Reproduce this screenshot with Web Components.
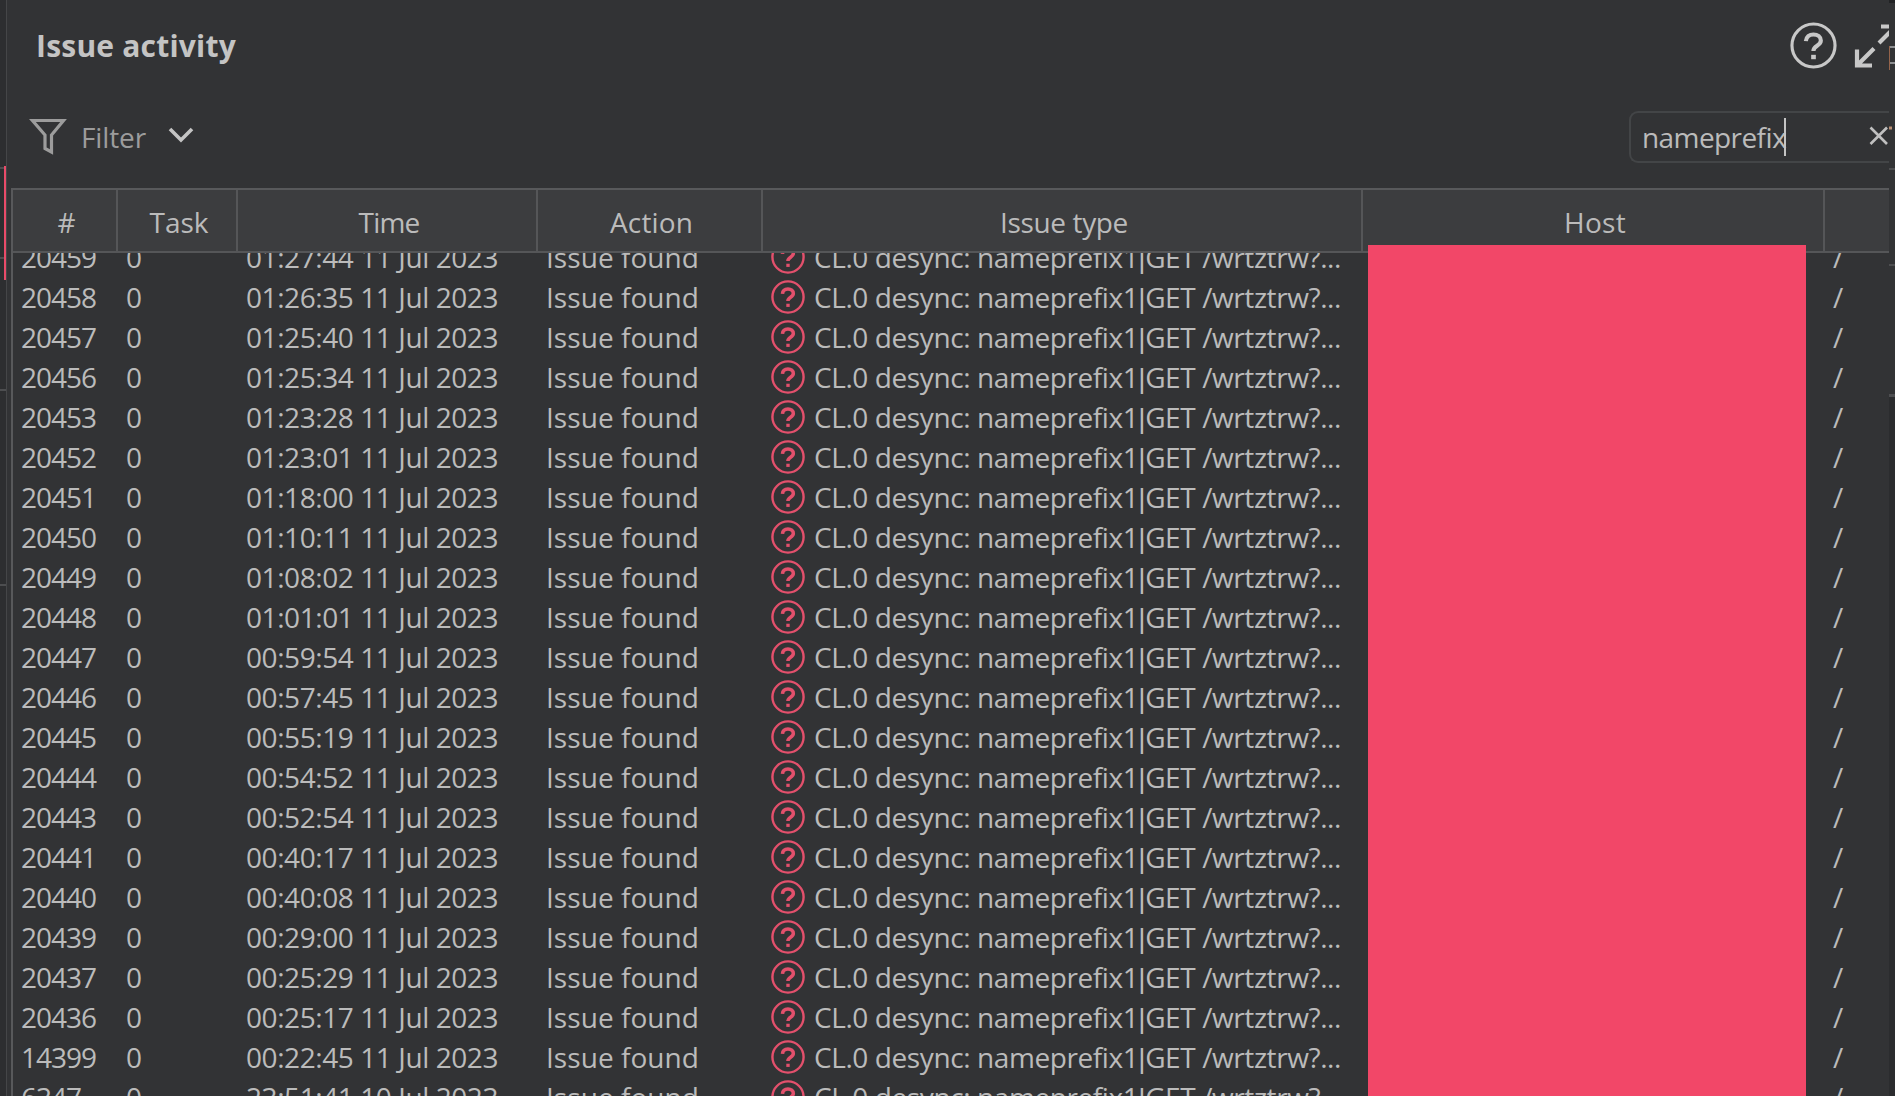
<!DOCTYPE html>
<html lang="en">
<head>
<meta charset="utf-8">
<title>Issue activity</title>
<style>
    html, body {
        margin: 0;
        height: 100%;
        overflow: hidden;
        background: #323335;
    }
    body {
        font-family: "Open Sans", "Noto Sans", sans-serif;
        font-size: 28px;
        color: #bbbbbb;
    }
</style>
</head>
<body>
<issue-window></issue-window>

<script>
(function() {
    // Single line of text, letter-spaced to fill the given width
    class FitText extends HTMLElement {
        constructor() {
            super();
            this.attachShadow({ mode: 'open' });
        }

        connectedCallback() {
            this.shadowRoot.innerHTML = `
                <style>
                    :host { display: block; flex: none; line-height: 40px; }
                    span { white-space: pre; }
                </style>
                <span><slot></slot></span>
            `;
            const span = this.shadowRoot.querySelector('span');
            const width = parseFloat(this.getAttribute('width'));
            const count = this.textContent.length;
            if (width && count > 1) {
                const natural = span.getBoundingClientRect().width;
                this.style.letterSpacing = ((width - natural) / count).toFixed(3) + 'px';
            }
        }
    }

    class HelpIcon extends HTMLElement {
        constructor() {
            super();
            this.attachShadow({ mode: 'open' });
        }

        connectedCallback() {
            const size = this.getAttribute('size') || '34';
            const stroke = this.getAttribute('stroke') || '2';
            const mark = this.getAttribute('mark') || '4';
            this.shadowRoot.innerHTML = `
                <style>
                    :host { display: block; flex: none; width: ${size}px; height: ${size}px; }
                    svg { display: block; }
                </style>
                <svg width="${size}" height="${size}" viewBox="0 0 48 48" fill="none" stroke="currentColor">
                    <circle cx="24" cy="24" r="22" stroke-width="${stroke}"/>
                    <path d="M16.2 19.6c.4-4.600 3.700-6.900 7.700-6.900 4.400 0 7.600 2.500 7.600 6.300 0 5.600-7.600 5-7.600 10.600" stroke-width="${mark}"/>
                    <path d="M24 33.500v4.500" stroke-width="4.800"/>
                </svg>
            `;
        }
    }

    class PanelHeader extends HTMLElement {
        constructor() {
            super();
            this.attachShadow({ mode: 'open' });
        }

        connectedCallback() {
            this.shadowRoot.innerHTML = `
                <style>
                    :host {
                        display: flex;
                        justify-content: space-between;
                        align-items: center;
                        height: 92px;
                        padding-left: 29px;
                        box-sizing: border-box;
                    }
                    .title { font-size: 30px; font-weight: 700; color: #c4c4c4; }
                    .tools { display: flex; align-items: center; gap: 17px; color: #c8c8c8; }
                    svg { display: block; }
                    help-icon { margin-bottom: 2px; }
                </style>
                <fit-text class="title" width="200">Issue activity</fit-text>
                <div class="tools">
                    <help-icon size="47" stroke="3.200" mark="4.200"></help-icon>
                    <svg width="35" height="46" viewBox="0 0 35 46" fill="none" stroke="currentColor" stroke-width="4.200">
                        <path d="M3 26.500V42.500H18M3.500 42L20 25.500M25 20L41 4M27 3.500H41"/>
                    </svg>
                </div>
            `;
        }
    }

    class FilterBar extends HTMLElement {
        constructor() {
            super();
            this.attachShadow({ mode: 'open' });
        }

        connectedCallback() {
            this.shadowRoot.innerHTML = `
                <style>
                    :host {
                        display: flex;
                        justify-content: space-between;
                        align-items: center;
                        height: 96px;
                        padding: 0 0 6px 22px;
                        box-sizing: border-box;
                    }
                    .filter { display: flex; align-items: center; color: #9c9c9c; }
                    .funnel { margin: 0 14px 3px 0; }
                    .chevron { margin: 0 0 4px 22px; color: #c4c4c4; }
                    svg { display: block; flex: none; }
                    .search {
                        display: flex;
                        align-items: center;
                        box-sizing: border-box;
                        width: 260px;
                        height: 52px;
                        padding-left: 11px;
                        border: 2px solid #434547;
                        border-right: 0;
                        border-radius: 9px 0 0 9px;
                    }
                    .caret { width: 2px; height: 38px; margin-left: -2px; background: #c4c4c4; }
                    .clear { margin: 0 0 3px auto; }
                </style>
                <div class="filter">
                    <svg class="funnel" width="38" height="38" viewBox="0 0 38 38" fill="none" stroke="currentColor" stroke-width="3.200">
                        <path d="M3.500 3.500H34.500L22.500 18V35L16 31.500V18Z"/>
                    </svg>
                    <fit-text width="65">Filter</fit-text>
                    <svg class="chevron" width="26" height="20" viewBox="0 0 26 20" fill="none" stroke="currentColor" stroke-width="3.600">
                        <path d="M2 4L13 15L24 4"/>
                    </svg>
                </div>
                <div class="search">
                    <fit-text width="144">nameprefix</fit-text>
                    <div class="caret"></div>
                    <svg class="clear" width="21" height="22" viewBox="0 0 21 22" fill="none" stroke="#c0c0c0" stroke-width="2.600">
                        <path d="M2.500 2.500L19 19M19 2.500L2.500 19"/>
                    </svg>
                </div>
            `;
        }
    }

    // id and time; every other column holds the same value on each row
    const issues = [
        ['20459', '01:27:44 11 Jul 2023'],
        ['20458', '01:26:35 11 Jul 2023'],
        ['20457', '01:25:40 11 Jul 2023'],
        ['20456', '01:25:34 11 Jul 2023'],
        ['20453', '01:23:28 11 Jul 2023'],
        ['20452', '01:23:01 11 Jul 2023'],
        ['20451', '01:18:00 11 Jul 2023'],
        ['20450', '01:10:11 11 Jul 2023'],
        ['20449', '01:08:02 11 Jul 2023'],
        ['20448', '01:01:01 11 Jul 2023'],
        ['20447', '00:59:54 11 Jul 2023'],
        ['20446', '00:57:45 11 Jul 2023'],
        ['20445', '00:55:19 11 Jul 2023'],
        ['20444', '00:54:52 11 Jul 2023'],
        ['20443', '00:52:54 11 Jul 2023'],
        ['20441', '00:40:17 11 Jul 2023'],
        ['20440', '00:40:08 11 Jul 2023'],
        ['20439', '00:29:00 11 Jul 2023'],
        ['20437', '00:25:29 11 Jul 2023'],
        ['20436', '00:25:17 11 Jul 2023'],
        ['14399', '00:22:45 11 Jul 2023'],
        ['6347', '23:51:41 10 Jul 2023']
    ];

    const columns = '105px 120px 300px 225px 600px 462px 1fr';

    class IssueRow extends HTMLElement {
        constructor() {
            super();
            this.attachShadow({ mode: 'open' });
        }

        connectedCallback() {
            const id = this.getAttribute('issue');
            this.shadowRoot.innerHTML = `
                <style>
                    :host {
                        display: grid;
                        grid-template-columns: ${columns};
                        height: 40px;
                    }
                    .cell { display: flex; align-items: center; padding-left: 8px; }
                    help-icon { color: #e3506c; margin: 0 9px 0 0; }
                    .bar { font-family: "Liberation Sans", sans-serif; line-height: 1; }
                </style>
                <div class="cell"><fit-text width="${id.length * 15}">${id}</fit-text></div>
                <div class="cell"><fit-text>0</fit-text></div>
                <div class="cell"><fit-text width="252">${this.getAttribute('time')}</fit-text></div>
                <div class="cell"><fit-text width="153">Issue found</fit-text></div>
                <div class="cell"><help-icon size="34" stroke="3.400" mark="5"></help-icon><fit-text width="527">CL.0 desync: nameprefix1<span class="bar">|</span>GET /wrtztrw?...</fit-text></div>
                <div class="cell"></div>
                <div class="cell"><fit-text>/</fit-text></div>
            `;
        }
    }

    class IssueTable extends HTMLElement {
        constructor() {
            super();
            this.attachShadow({ mode: 'open' });
        }

        connectedCallback() {
            const heads = [['#', ''], ['Task', 59], ['Time', 61], ['Action', 83], ['Issue type', 128], ['Host', 62], ['', '']];
            this.shadowRoot.innerHTML = `
                <style>
                    :host {
                        display: flex;
                        flex-direction: column;
                        position: relative;
                        height: 908px;
                        margin-left: 4px;
                        border: 2px solid #58595b;
                        border-width: 2px 0 0 2px;
                        box-sizing: border-box;
                        overflow: hidden;
                    }
                    .head {
                        display: grid;
                        grid-template-columns: ${columns};
                        flex: none;
                        height: 63px;
                        box-sizing: border-box;
                        background: #3c3d3f;
                        border-bottom: 2px solid #555658;
                    }
                    .head div {
                        display: flex;
                        align-items: center;
                        justify-content: center;
                        padding: 3px 0 0 4px;
                        border-right: 2px solid #555658;
                    }
                    .head div:last-child { border-right: 0; }
                    .body { flex: 1; overflow: hidden; }
                    .rows { margin-top: -16px; }
                    /* hides the host names */
                    .redaction {
                        position: absolute;
                        left: 1355px;
                        top: 55px;
                        width: 438px;
                        bottom: 0;
                        background: #f24768;
                    }
                </style>
                <div class="head">
                    ${heads.map(([label, width]) => `<div>${label && `<fit-text width="${width}">${label}</fit-text>`}</div>`).join('')}
                </div>
                <div class="body">
                    <div class="rows">
                        ${issues.map(([id, time]) => `<issue-row issue="${id}" time="${time}"></issue-row>`).join('')}
                    </div>
                </div>
                <div class="redaction"></div>
            `;
        }
    }

    // Sliver of the window behind the panel
    class EdgeStrip extends HTMLElement {
        constructor() {
            super();
            this.attachShadow({ mode: 'open' });
        }

        connectedCallback() {
            const side = this.getAttribute('side');
            const marks = this.getAttribute('marks').split(' ');
            this.shadowRoot.innerHTML = `
                <style>
                    :host { display: block; position: relative; overflow: hidden; background: #2d2e30; }
                    :host([side="left"]) { border-right: 1px solid #454648; }
                    :host([side="right"]) { background: linear-gradient(#323335 395px, #2b2c2e 395px); }
                    i { position: absolute; left: 0; width: 6px; height: 2px; background: #4d4e50; }
                    .active { position: absolute; left: 4px; top: 166px; width: 2px; height: 114px; background: #e94b69; }
                    svg { display: block; }
                </style>
                ${marks.map(y => `<i style="top: ${y}px"></i>`).join('')}
                ${side === 'left' ? '<div class="active"></div>' : `
                    <svg width="6" height="140" viewBox="0 0 6 140" fill="none">
                        <path d="M0 1.500H6" stroke="#222325" stroke-width="3"/>
                        <path d="M.5 46V70" stroke="#94634a"/>
                        <path d="M1 47H6M1 63H6" stroke="#8c8e90" stroke-width="2"/>
                        <path d="M0 128H3" stroke="#b98f73" stroke-width="3"/>
                    </svg>
                `}
            `;
        }
    }

    class IssueWindow extends HTMLElement {
        constructor() {
            super();
            this.attachShadow({ mode: 'open' });
        }

        connectedCallback() {
            this.shadowRoot.innerHTML = `
                <style>
                    :host {
                        display: grid;
                        grid-template-columns: 7px 1882px 6px;
                        height: 1096px;
                        overflow: hidden;
                    }
                    main { min-width: 0; overflow: hidden; }
                </style>
                <edge-strip side="left" marks="167 257 389 584"></edge-strip>
                <main>
                    <panel-header></panel-header>
                    <filter-bar></filter-bar>
                    <issue-table></issue-table>
                </main>
                <edge-strip side="right" marks="168 264 394 395"></edge-strip>
            `;
        }
    }

    customElements.define('fit-text', FitText);
    customElements.define('help-icon', HelpIcon);
    customElements.define('panel-header', PanelHeader);
    customElements.define('filter-bar', FilterBar);
    customElements.define('issue-row', IssueRow);
    customElements.define('issue-table', IssueTable);
    customElements.define('edge-strip', EdgeStrip);
    customElements.define('issue-window', IssueWindow);
})();
</script>
</body>
</html>
